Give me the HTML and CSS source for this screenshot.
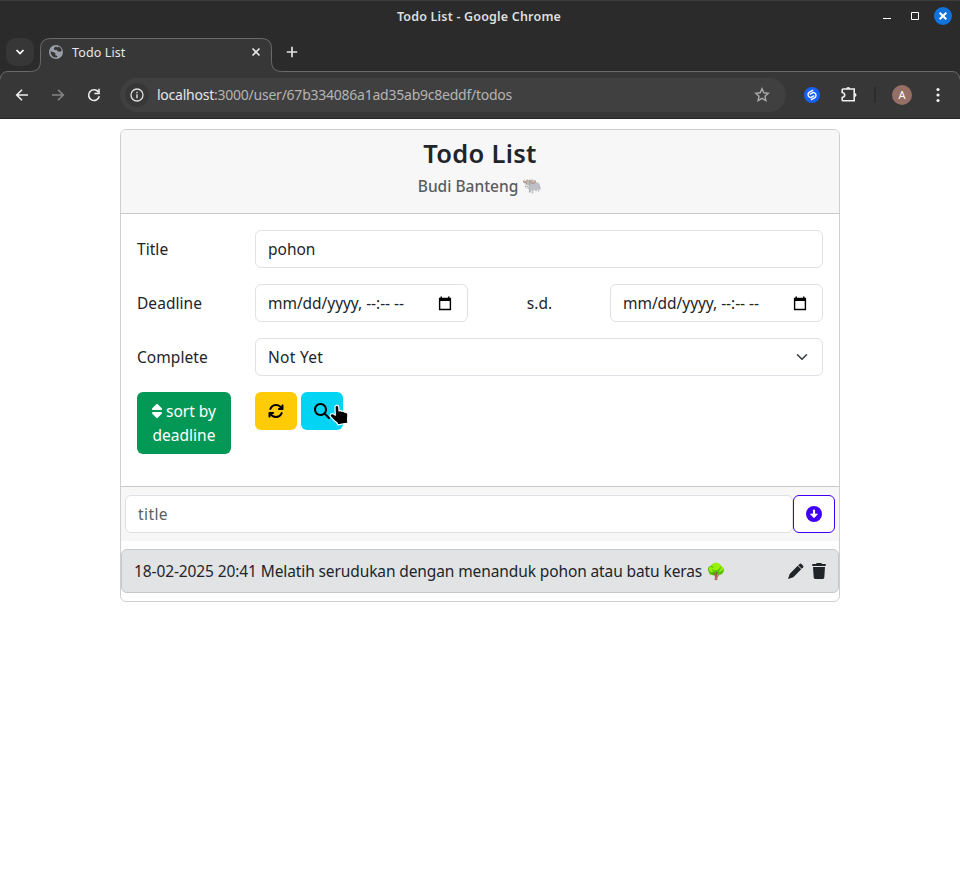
FILE: index.html
```html
<!DOCTYPE html>
<html lang="en">
<head>
<meta charset="utf-8">
<title>Todo List</title>
<link rel="stylesheet" href="styles.css">
</head>
<body>
<div class="chrome">
  <div class="titlebar">
    <span class="window-title">Todo List - Google Chrome</span>
    <div class="window-controls">
      <svg width="76" height="20" viewBox="0 0 76 20"><path d="M4 12.500h8" stroke="#fff"/><path d="M32.500 6.500h7v7h-7z" fill="none" stroke="#fff"/><circle cx="64" cy="10" r="9" fill="#0f73dd"/><path d="M60.700 6.700l6.600 6.600m0-6.600l-6.600 6.600" stroke="#fff" stroke-width="2"/></svg>
    </div>
  </div>
  <div class="tabstrip">
    <svg class="tab-outline" width="960" height="80" viewBox="0 0 960 80"><path d="M0 80V41.500Q1 33.500 8 33.500H30.500Q40.500 33.500 40.500 23.500V10.500Q40.500.5 50.500.5H261.500Q271.500.5 271.500 10.500V23.500Q271.500 33.500 281.500 33.500H952Q959 33.500 960 41.500V80z" fill="#373737"/><path d="M0 41.500Q1 33.500 8 33.500H30.500Q40.500 33.500 40.500 23.500V10.500Q40.500.5 50.500.5H261.500Q271.500.5 271.500 10.500V23.500Q271.500 33.500 281.500 33.500H952Q959 33.500 960 41.500" fill="none" stroke="#6b6969"/></svg>
    <div class="tab-search"><svg width="10" height="8" viewBox="0 0 10 8"><path d="M1.500 2L5 5.500 8.500 2" fill="none" stroke="#fff" stroke-width="1.700"/></svg></div>
    <div class="tab">
      <svg width="14" height="14" viewBox="0 0 14 14"><circle cx="7" cy="7" r="7" fill="#9aa0a8"/><path d="M7 1.200L4.800 3.200 5.500 5H7.700L8.600 6.300 11 6.800 12.700 6Q12.400 2.600 9.500 1.600L8.200 2.500zM1.500 6.500L4.500 7 6.500 8.400 6.300 10.300 8.300 11 8 12.600Q2 13 1.500 6.500z" fill="#373737"/></svg>
      <span class="tab-title">Todo List</span>
      <svg class="tab-close" width="10" height="10" viewBox="0 0 10 10"><path d="M1.500 1.500l7 7m0-7l-7 7" stroke="#e8e8e8" stroke-width="1.600"/></svg>
    </div>
    <svg class="new-tab" width="12" height="12" viewBox="0 0 12 12"><path d="M6 .8v10.400M.8 6h10.400" stroke="#e3e3e3" stroke-width="1.700"/></svg>
  </div>
  <div class="toolbar">
    <svg class="nav" width="14" height="14" viewBox="0 0 14 14"><path d="M13 7H1.800M7 1.700L1.700 7 7 12.300" fill="none" stroke="#eee" stroke-width="1.600"/></svg>
    <svg class="nav" width="14" height="14" viewBox="0 0 14 14"><path d="M1 7h11.200M7 1.700L12.300 7 7 12.300" fill="none" stroke="#858585" stroke-width="1.600"/></svg>
    <svg class="nav" width="14" height="14" viewBox="0 0 14 14"><path d="M11.600 4.200A5.400 5.400 0 1 0 12.300 8.300" fill="none" stroke="#eee" stroke-width="1.600"/><path d="M12.800.8v5.400H7.400V4.700h3.900V.8z" fill="#eee"/></svg>
    <div class="omnibox">
      <div class="site-info"><svg width="14" height="14" viewBox="0 0 14 14"><circle cx="7" cy="7" r="6" fill="none" stroke="#e0e0e0" stroke-width="1.300"/><path d="M7 6.300v4M7 3.700v1.500" stroke="#e0e0e0" stroke-width="1.400"/></svg></div>
      <span class="url"><b>localhost</b>:3000/user/67b334086a1ad35ab9c8eddf/todos</span>
      <svg class="star" width="16" height="16" viewBox="0 0 16 16"><path d="M8 1.700l1.850 4.050 4.400.500-3.250 3 .9 4.400L8 11.400l-3.900 2.250.9-4.400-3.250-3 4.400-.5z" fill="none" stroke="#aaa" stroke-width="1.400"/></svg>
    </div>
    <div class="extensions">
      <svg width="16" height="16" viewBox="0 0 16 16"><circle cx="8" cy="8" r="8" fill="#1760f5"/><path d="M8.700 3.400L5.400 5.200A2.900 2.900 0 0 0 5.200 10Q6.500 11 8.100 9.900L9.700 8.900M7.300 12.600L10.600 10.800A2.900 2.900 0 0 0 10.800 6Q9.500 5 7.900 6.100L6.300 7.100" fill="none" stroke="#fff" stroke-width="1.400" stroke-linecap="round"/></svg>
      <svg width="18" height="18" viewBox="0 0 18 18"><path d="M2.200 3.700Q2.200 3 3 3h11.200v11.800H3q-.8 0-.8-.8v-2.500Q4.700 11 4.700 9T2.200 6.500z" fill="none" stroke="#eee" stroke-width="1.600"/><path d="M6.200 3a2 2 0 0 1 4 0zM14.500 7a2 2 0 0 1 0 4z" fill="#eee"/></svg>
      <i class="divider"></i>
      <div class="avatar">A</div>
      <svg width="4" height="16" viewBox="0 0 4 16" fill="#f1f1f1"><circle cx="2" cy="2.500" r="1.600"/><circle cx="2" cy="8" r="1.600"/><circle cx="2" cy="13.500" r="1.600"/></svg>
    </div>
  </div>
</div>
<main class="card">
  <header class="card-header">
    <h1>Todo List</h1>
    <h2><span>Budi Banteng</span> <span class="emoji">🐃</span></h2>
  </header>
  <section class="filters">
    <label>Title</label>
    <div class="control">pohon</div>
    <label>Deadline</label>
    <div class="range">
      <div class="control date"><span>mm/dd/yyyy, --:-- --</span><svg width="14" height="15" viewBox="0 0 14 15"><path d="M1.600 2.500h10.800v11H1.600z" fill="none" stroke="#000" stroke-width="1.400"/><path d="M1 2h12v3H1zM2.500.500H4V3H2.500zM10 .5h1.500V3H10z"/></svg></div>
      <span class="until">s.d.</span>
      <div class="control date"><span>mm/dd/yyyy, --:-- --</span><svg width="14" height="15" viewBox="0 0 14 15"><path d="M1.600 2.500h10.800v11H1.600z" fill="none" stroke="#000" stroke-width="1.400"/><path d="M1 2h12v3H1zM2.500.500H4V3H2.500zM10 .5h1.500V3H10z"/></svg></div>
    </div>
    <label>Complete</label>
    <div class="control select"><span class="value">Not Yet</span><svg width="16" height="12" viewBox="0 0 16 16"><path d="M2 5l6 6 6-6" fill="none" stroke="#343a40" stroke-width="2" stroke-linecap="round" stroke-linejoin="round"/></svg></div>
    <button class="btn sort"><svg width="10" height="16" viewBox="0 0 320 512"><path fill="#fff" d="M137.400 41.400c12.500-12.500 32.800-12.500 45.300 0l128 128c9.200 9.200 11.900 22.900 6.900 34.900s-16.600 19.800-29.600 19.800H32c-12.900 0-24.600-7.800-29.600-19.800s-2.200-25.700 6.900-34.900l128-128zm0 429.300l-128-128c-9.200-9.200-11.900-22.900-6.900-34.900s16.600-19.800 29.600-19.800H288c12.900 0 24.600 7.800 29.600 19.800s2.200 25.700-6.900 34.900l-128 128c-12.500 12.500-32.800 12.500-45.300 0z"/></svg> sort by<br>deadline</button>
    <div class="actions">
      <button class="btn refresh"><svg width="16" height="16" viewBox="0 0 512 512"><path d="M105.100 202.600c7.700-21.800 20.200-42.300 37.800-59.800c62.500-62.500 163.800-62.500 226.300 0L386.300 160H352c-17.700 0-32 14.300-32 32s14.300 32 32 32H463.500c17.700 0 32-14.300 32-32V80c0-17.700-14.300-32-32-32s-32 14.300-32 32v35.200L414.400 97.600c-87.500-87.500-229.300-87.500-316.800 0C73.200 122 55.600 150.700 44.800 181.400c-5.900 16.700 2.900 34.900 19.500 40.800s34.900-2.900 40.800-19.500zM39 289.300c-5 1.500-9.800 4.200-13.700 8.200c-4 4-6.700 8.800-8.100 14c-.8 3-1.200 6.100-1.200 9.200V432c0 17.700 14.300 32 32 32s32-14.300 32-32V396.900l17.600 17.500c87.500 87.400 229.300 87.400 316.700 0c24.400-24.400 42.100-53.100 52.900-83.700c5.900-16.700-2.900-34.900-19.500-40.800s-34.900 2.900-40.800 19.500c-7.700 21.800-20.200 42.300-37.800 59.800c-62.500 62.500-163.800 62.500-226.300 0L125.600 352H160c17.700 0 32-14.300 32-32s-14.300-32-32-32H48.400c-3.200 0-6.400.4-9.400 1.300z"/></svg></button>
      <button class="btn search"><svg width="16" height="16" viewBox="0 0 512 512"><path d="M416 208c0 45.900-14.900 88.300-40 122.700L502.600 457.400c12.500 12.500 12.500 32.800 0 45.300s-32.800 12.500-45.300 0L330.700 376c-34.400 25.200-76.800 40-122.700 40C93.100 416 0 322.900 0 208S93.100 0 208 0S416 93.100 416 208zM208 352a144 144 0 1 0 0-288 144 144 0 1 0 0 288z"/></svg>
        <svg class="pointer" width="20" height="22" viewBox="0 0 20 22"><path d="M6 2.600C6.200.8 9.600.8 9.800 3L10 6.900Q11.500 6 12.800 7.300 14.500 6.700 15.500 8.100 18.900 8 18.900 11L18.500 15.800 19 19 8.700 20.800 8 18.700Q4.700 16.700 1.500 12.700C.2 10.700 2.800 8.800 4.500 10L6.300 11.200z" stroke="#fff" stroke-width="1.200" stroke-linejoin="round"/></svg>
      </button>
    </div>
  </section>
  <section class="add-row">
    <div class="control placeholder">title</div>
    <button class="btn add"><svg width="16" height="16" viewBox="0 0 16 16"><circle cx="8" cy="8" r="8" fill="#4000f5"/><path d="M8 4.700V8" stroke="#fff" stroke-width="2.200" stroke-linecap="round"/><path d="M4.400 8H11.600L8 11.900z" fill="#fff" stroke="#fff" stroke-width=".6" stroke-linejoin="round"/></svg></button>
  </section>
  <section class="list">
    <article class="todo"><span class="todo-text">18-02-2025 20:41 Melatih serudukan dengan menanduk pohon atau batu keras</span><span class="emoji">🌳</span>
      <div class="todo-actions"><svg width="16" height="16" viewBox="0 0 16 16" fill="#212529"><path d="M11.300 1.200Q12.500 0 13.700 1.200L14.900 2.400Q16.100 3.600 14.900 4.700L13.700 5.800 10.200 2.300zM9.700 2.800L13.200 6.300 5.600 13.900Q5.200 14.300 4.500 14.500L0 16 1.500 11.500Q1.700 10.800 2.100 10.400z"/></svg><svg width="14" height="16" viewBox="0 0 14 16" fill="#212529"><path d="M4.200.6Q4.500 0 5.200 0H8.800Q9.500 0 9.800.6L10 1H13A1 1 0 0 1 13 3H1A1 1 0 0 1 1 1H4zM1 4H13L12.300 14.600Q12.200 16 10.800 16H3.200Q1.800 16 1.700 14.600z"/></svg></div>
    </article>
  </section>
</main>
</body>
</html>
```
FILE: styles.css
```css
* { box-sizing: border-box; }
body { margin: 0; background: #fff; color: #212529; font: 15.5px/24px "Noto Sans", sans-serif; }
svg { display: block; flex: none; }
.chrome { height: 119px; background: #2b2b2b; border-top: 1px solid #3c3c3c; border-bottom: 1px solid #242424; }
.titlebar { height: 37px; display: flex; justify-content: center; position: relative; }
.window-title { color: #dedede; font-size: 12.5px; font-weight: 600; line-height: 31px; letter-spacing: .19px; margin-right: 2px; }
.window-controls { position: absolute; right: 5px; top: 5px; }
.tabstrip { height: 34px; display: flex; align-items: flex-start; position: relative; }
.tab-outline { position: absolute; left: 0; top: 0; }
.tab-search { width: 28px; height: 28px; margin-left: 6px; border-radius: 10px; background: #373737; display: flex; align-items: center; justify-content: center; position: relative; }
.tab { width: 232px; height: 28px; margin-left: 6px; padding: 0 11px 0 9px; display: flex; align-items: center; position: relative; }
.tab-title { margin-left: 9px; padding-top: 2px; color: #e8e8e8; font-size: 12.5px; letter-spacing: .12px; }
.tab-close { margin-left: auto; }
.new-tab { margin: 8px 0 0 14px; position: relative; }
.toolbar { height: 46px; display: flex; align-items: center; padding-left: 15px; position: relative; }
.nav { margin-right: 22px; }
.omnibox { width: 666px; height: 34px; margin-left: -3px; border-radius: 17px; background: #404040; display: flex; align-items: center; padding: 0 16px 0 5px; }
.site-info { width: 24px; height: 24px; border-radius: 50%; background: #373737; display: flex; align-items: center; justify-content: center; }
.url { margin-left: 8px; color: #b4b4b4; font-size: 14px; letter-spacing: -.24px; }
.url b { color: #e6e6e6; font-weight: 400; }
.star { margin-left: auto; }
.extensions { flex: 1; display: flex; align-items: center; padding-left: 18px; }
.extensions svg:nth-of-type(2) { margin-left: 20px; }
.divider { width: 2px; height: 16px; margin-left: 16px; background: #2c2c2c; }
.avatar { width: 20px; height: 20px; margin: 0 24px 0 16px; border-radius: 50%; background: #966f66; color: #fff; font-size: 11px; line-height: 20px; text-align: center; }
.card { width: 720px; height: 473px; margin: 10px auto 0; border: 1px solid #cfcfcf; border-radius: 6px; overflow: hidden; }
.card-header { height: 84px; padding-top: 7px; background: #f7f7f7; border-bottom: 1px solid #c9c9c9; text-align: center; }
h1 { margin: 0 0 7px; font-size: 25.5px; line-height: 32px; font-weight: 570; letter-spacing: .3px; }
h2 { margin: 0; font-size: 15.5px; line-height: 20px; font-weight: 500; color: #585d61; display: flex; justify-content: center; gap: 4px; }
.emoji { font-family: "Noto Color Emoji", sans-serif; font-size: 16px; }
h2 .emoji { opacity: .75; }
.filters { height: 273px; padding: 16px; display: grid; grid-template-columns: 94px 568px; column-gap: 24px; row-gap: 16px; grid-template-rows: 38px 38px 38px 62px; border-bottom: 1px solid #c9c9c9; }
.filters label { line-height: 38px; letter-spacing: .05px; }
.control { height: 38px; border: 1px solid #dee2e6; border-radius: 6px; background: #fff; padding: 0 12px; line-height: 36px; }
.range { display: grid; grid-template-columns: 213px 142px 213px; }
.until { text-align: center; line-height: 38px; padding-left: 1px; }
.date, .select { display: flex; align-items: center; justify-content: space-between; }
.date { padding-right: 15px; white-space: nowrap; letter-spacing: -.05px; }
.value { letter-spacing: .3px; }
.btn { border: 0; border-radius: 6px; padding: 0; font: inherit; display: flex; align-items: center; justify-content: center; }
.sort { display: block; padding: 7px 0; background: #039855; color: #fff; }
.sort svg { display: inline-block; vertical-align: -2px; }
.actions { display: flex; gap: 4px; height: 38px; }
.actions .btn { width: 42px; position: relative; }
.refresh { background: #ffca06; }
.search { background: #04d4f4; }
.pointer { position: absolute; left: 28px; top: 12px; }
.add-row { height: 54px; padding: 8px 4px; background: #f7f7f7; display: flex; }
.placeholder { flex: 1; color: #595f64; letter-spacing: .4px; }
.add { width: 42px; height: 38px; border: 1px solid #4000f5; background: #fff; }
.list { padding-top: 8px; }
.todo { height: 44px; border: 1px solid #c4c8cb; border-radius: 6px; background: #e2e3e5; display: flex; align-items: center; padding: 0 12px; }
.todo-text { white-space: nowrap; letter-spacing: -.11px; }
.todo .emoji { margin-left: 4px; padding-top: 1px; filter: saturate(1.4) brightness(1.2); }
.todo-actions { margin-left: auto; display: flex; gap: 8px; }
```
